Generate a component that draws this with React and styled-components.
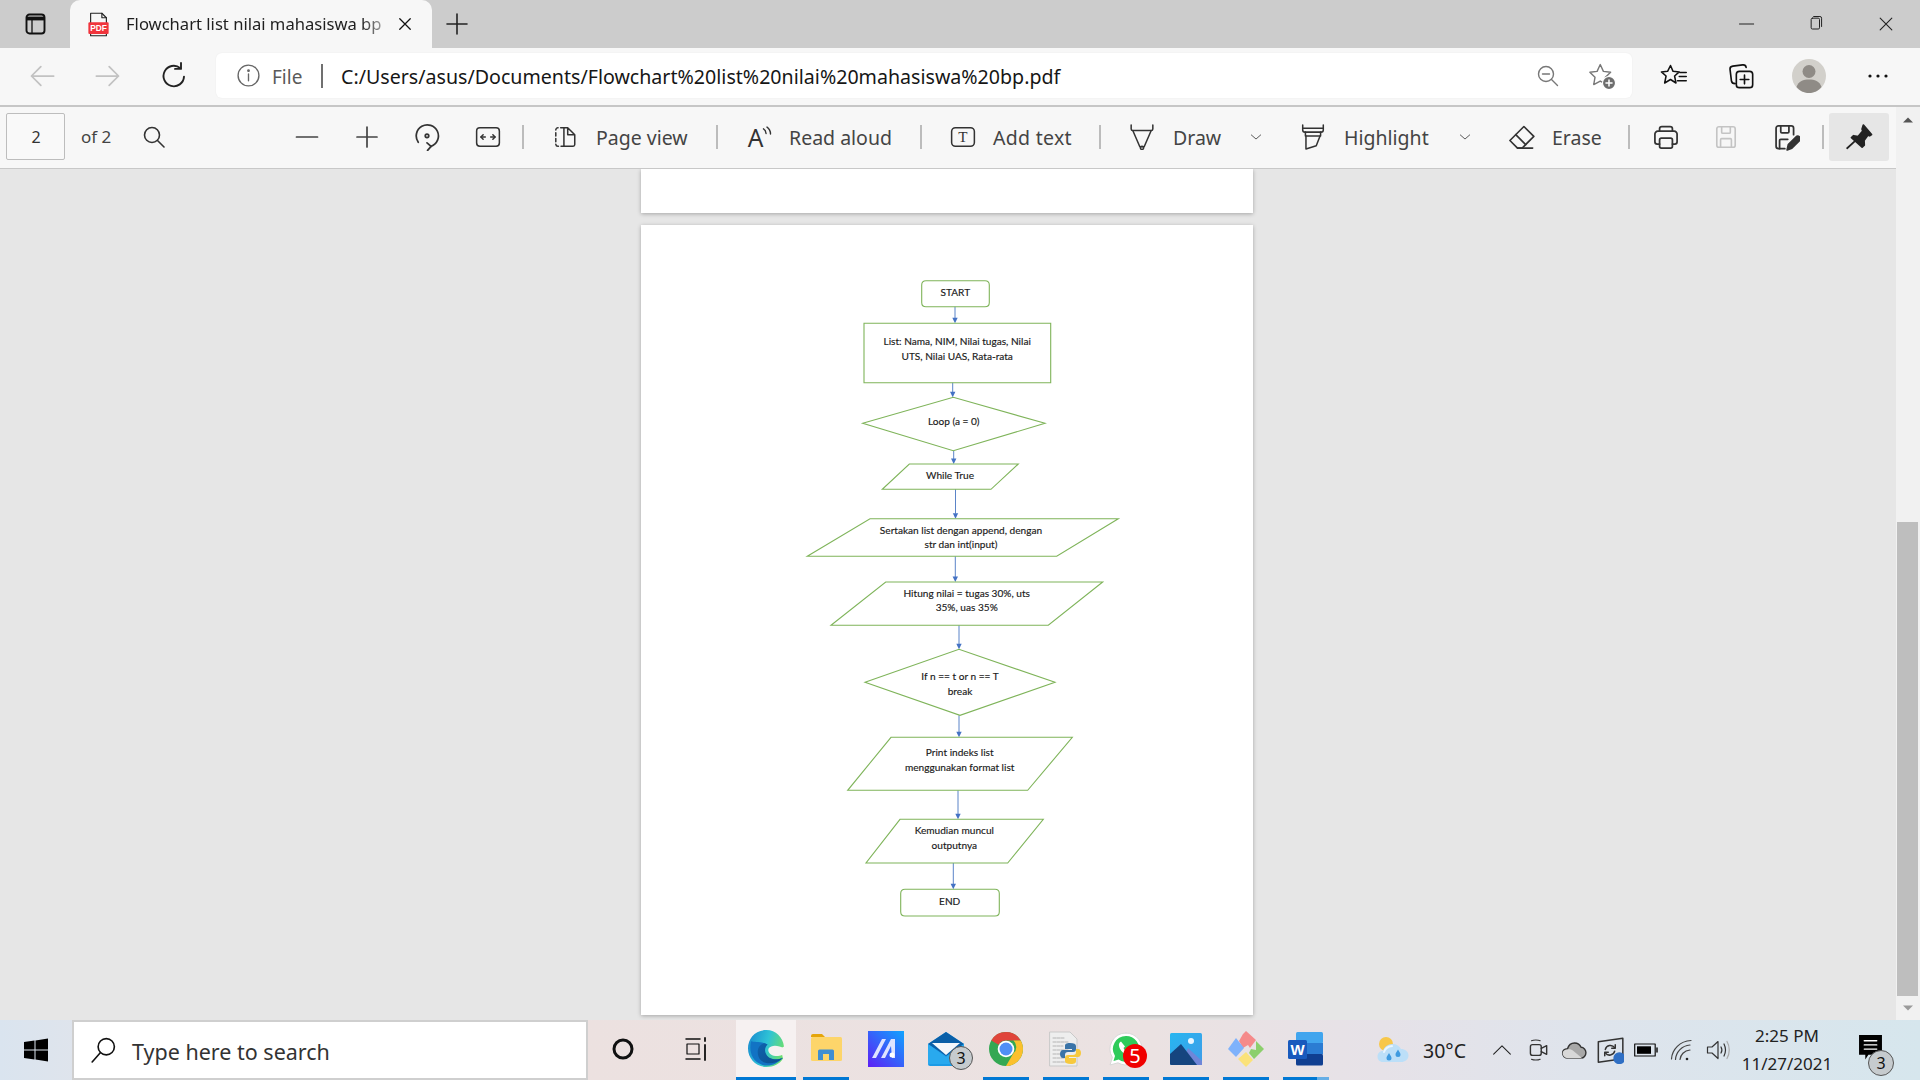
import React from "react";
import styled, { createGlobalStyle } from "styled-components";

const UI = `"Noto Sans", "Open Sans", "Liberation Sans", sans-serif`;

const Global = createGlobalStyle`
  html, body { margin: 0; padding: 0; width: 1920px; height: 1080px; overflow: hidden; background: #e6e6e6; }
  * { box-sizing: border-box; }
`;

const Screen = styled.div`
  width: 1920px; height: 1080px; display: flex; flex-direction: column;
  font-family: ${UI}; overflow: hidden;
`;

/* ---------- generic parts ---------- */
const Glyph = styled.svg`
  display: block; flex: none;
  width: ${p => p.$s || 24}px; height: ${p => p.$s || 24}px;
  color: ${p => p.$c || "#333"};
  fill: none; stroke: currentColor;
  stroke-width: ${p => p.$w || 1.5};
  stroke-linecap: round; stroke-linejoin: round;
`;
const Ico = ({ s, c, w, children, box = 24 }) => (
  <Glyph $s={s} $c={c} $w={w} viewBox={`0 0 ${box} ${box}`}>{children}</Glyph>
);
const IconSlot = styled.div`
  flex: none; display: flex; align-items: center; justify-content: center;
  width: ${p => p.$w || 60}px;
  margin-left: ${p => p.$ml || 0}px;
`;

/* ---------- tab strip ---------- */
const TabStrip = styled.div`
  height: 48px; flex: none; background: #cccccc; display: flex; align-items: center;
`;
const Tab = styled.div`
  width: 362px; height: 48px; background: #f7f7f7; border-radius: 10px 10px 0 0;
  display: flex; align-items: center; padding-left: 15px;
`;
const TabTitle = styled.div`
  width: 267px; margin-left: 14px; padding-bottom: 2px; font-size: 16.6px; color: #1f1f1f; white-space: nowrap;
  -webkit-mask-image: linear-gradient(90deg, #000 88%, rgba(0,0,0,.25) 98%);
  mask-image: linear-gradient(90deg, #000 88%, rgba(0,0,0,.25) 98%);
`;
const WindowControls = styled.div`
  margin-left: auto; display: flex; align-items: center;
`;

/* ---------- address row ---------- */
const AddressRow = styled.div`
  height: 59px; flex: none; background: #f7f7f7; border-bottom: 2px solid #c6c6c6;
  display: flex; align-items: center; padding: 0 0 2px 12px;
`;
const AddressBar = styled.div`
  width: 1416px; height: 45px; margin-left: 12px; background: #fff; border-radius: 6px;
  display: flex; align-items: center; padding: 0 14px 0 18px;
  box-shadow: 0 0 2px rgba(0,0,0,.06);
`;
const FileLabel = styled.span`
  margin-left: 10px; width: 32px; padding-top: 2px; font-size: 19px; color: #5a5a5a; white-space: nowrap;
`;
const AddressSep = styled.div`
  width: 2px; height: 24px; margin-left: 17px; background: #707070;
`;
const Url = styled.span`
  margin-left: 18px; flex: 1; padding-top: 2px; font-size: 19.63px; color: #161616; white-space: nowrap;
`;

/* ---------- body ---------- */
const Body = styled.div`
  flex: 1; min-height: 0; display: flex;
`;
const Column = styled.div`
  flex: 1; min-width: 0; display: flex; flex-direction: column;
`;
const Toolbar = styled.div`
  height: 62px; flex: none; background: #f7f7f7; border-bottom: 1px solid #c8c8c8;
  display: flex; align-items: center; padding: 0 0 2px 6px;
`;
const PageBox = styled.div`
  width: 59px; height: 47px; border: 1px solid #bdbdbd; border-radius: 2px; background: #f9f9f9;
  display: flex; align-items: center; justify-content: center; padding-left: 1px; font-size: 16px; color: #333;
`;
const OfText = styled.span`
  margin-left: 16px; width: 31px; font-size: 17px; color: #444; white-space: nowrap;
`;
const ToolSep = styled.div`
  flex: none; width: 2px; height: 24px; background: #bcbcbc; margin-left: ${p => p.$ml || 0}px;
`;
const ToolLabel = styled.span`
  flex: none; width: ${p => p.$w}px; margin-left: ${p => p.$ml}px; padding-top: 3px; font-size: 19.5px; color: #444;
  white-space: nowrap; line-height: 26px; letter-spacing: ${p => p.$ls || 0}px;
`;
const PinButton = styled.div`
  flex: none; width: 60px; height: 48px; margin-left: 5px; background: #e6e6e6; border-radius: 3px;
  display: flex; align-items: center; justify-content: center;
`;

const Viewer = styled.div`
  flex: 1; min-height: 0; background: #e6e6e6; display: flex; flex-direction: column; align-items: center;
  padding-right: 2px; overflow: hidden;
`;
const PageSheet = styled.div`
  flex: none; width: 612px; height: ${p => p.$h}px; margin-top: ${p => p.$mt || 0}px;
  background: #fff; box-shadow: 0 1px 4px rgba(0,0,0,.28);
`;
const Sheet = styled.svg`
  display: block; width: 612px; height: 790px;
`;
const FlowLine = styled.path`
  fill: none; stroke: #7fb45a; stroke-width: 1.1;
`;
const FlowArrow = styled.path`
  fill: none; stroke: #5b84c8; stroke-width: 1;
`;
const FlowHead = styled.polygon`
  fill: #4472c4;
`;
const FlowText = styled.text`
  font-family: "Lato", "Open Sans", sans-serif; font-size: 10.1px; font-weight: 400; fill: #1a1a1a;
  stroke: #1a1a1a; stroke-width: .15;
  text-anchor: middle; dominant-baseline: central;
`;

const ScrollTrack = styled.div`
  width: 24px; flex: none; background: #f1f1f1; display: flex; flex-direction: column;
`;
const ScrollEnd = styled.div`
  height: ${p => p.$h}px; flex: none; display: flex; align-items: center; justify-content: center;
`;
const ScrollGap = styled.div`
  flex: 1;
`;
const ScrollThumb = styled.div`
  flex: none; height: 474px; width: 21px; margin-left: 1px; background: #bebebe;
`;

/* ---------- taskbar ---------- */
const Taskbar = styled.div`
  height: 60px; flex: none; display: flex; align-items: stretch;
  background: linear-gradient(90deg, #dae4ef 0, #dfe4ec 4%, #ece1e0 30%, #ebe2e2 60%, #e6e2e8 72%, #dfe4ec 82%, #d6e6ed 100%);
`;
const StartSlot = styled.div`
  width: 72px; flex: none; display: flex; align-items: center; justify-content: center;
`;
const SearchBox = styled.div`
  width: 516px; flex: none; background: #fff; border: 2px solid #cfcfcf; display: flex; align-items: center;
  padding-left: 16px;
`;
const SearchText = styled.span`
  margin-left: 16px; padding-top: 3px; font-size: 21.5px; color: #333; white-space: nowrap;
`;
const TaskSlot = styled.div`
  flex: none; width: ${p => p.$w || 60}px; margin-left: ${p => p.$ml || 0}px; position: relative;
  display: flex; align-items: center; justify-content: center; padding-bottom: 3px;
  background: ${p => p.$active ? "#f6f1f1" : "transparent"};
  &::after {
    content: ""; position: absolute; bottom: 0; height: 3px;
    left: ${p => p.$active ? 0 : 7}px; right: ${p => p.$active ? 0 : 7}px;
    background: ${p => p.$open ? (p.$part ? "linear-gradient(90deg,#0078d4 74%,#66aee6 74%)" : "#0078d4") : "transparent"};
  }
`;
const CountBadge = styled.span`
  position: absolute; left: 33px; top: 26px; width: 24px; height: 24px; border-radius: 50%;
  background: #c6cbce; border: 1px solid #555; color: #111; font-size: 16px;
  display: flex; align-items: center; justify-content: center; line-height: 1;
`;
const AlertBadge = styled.span`
  position: absolute; left: 27px; top: 24px; width: 24px; height: 24px; border-radius: 50%;
  background: #f00000; color: #fff; font-size: 20px;
  display: flex; align-items: center; justify-content: center; line-height: 1;
`;
const Temp = styled.span`
  flex: none; width: 44px; margin-left: 14px; align-self: center; font-size: 19.5px; color: #222; white-space: nowrap;
`;
const Clock = styled.div`
  flex: none; width: 102px; display: flex; flex-direction: column; align-items: center; justify-content: center;
  gap: 6px; font-size: 17px; line-height: 22px; color: #222; white-space: nowrap;
`;
const NotifySlot = styled.div`
  flex: none; width: 68px; position: relative; display: flex; align-items: center; justify-content: center;
  padding: 0 4px 6px 0;
`;
const NotifyBadge = styled(CountBadge)`
  left: 30px; top: 30px; width: 26px; height: 26px;
`;

/* ---------- icons ---------- */
const SidebarIcon = () => (
  <Ico s={24} c="#111" w={1.9}>
    <rect x="3.500" y="2.500" width="18" height="19" rx="3" />
    <path d="M4 6.500h17" strokeWidth="3.800" strokeLinecap="butt" />
    <path d="M9 8.500v12" strokeWidth="1.300" />
  </Ico>
);
const PdfIcon = () => (
  <Ico s={27} c="#222" w={1}>
    <path d="M5 11V2h10l4 4v5M5 20v2h14v-2" />
    <path d="M15 2v4h4" />
    <rect x="3" y="10" width="18" height="10.500" rx="1" fill="#f0343c" stroke="none" />
    <text x="12" y="18" textAnchor="middle" fontFamily="Liberation Sans, sans-serif" fontWeight="700" fontSize="7.400" fill="#fff" stroke="none">PDF</text>
  </Ico>
);
const CloseIcon = ({ s = 18, c = "#111", w = 1.700 }) => (
  <Ico s={s} c={c} w={w}><path d="M5 5l14 14M19 5L5 19" /></Ico>
);
const PlusIcon = ({ s = 24, c = "#222", w = 1.600 }) => (
  <Ico s={s} c={c} w={w}><path d="M12 2v20M2 12h20" /></Ico>
);
const BackIcon = () => <Ico s={28} c="#c2c2c2"><path d="M22 12H3M11 4l-8 8 8 8" /></Ico>;
const ForwardIcon = () => <Ico s={28} c="#c2c2c2"><path d="M2 12h19M13 4l8 8-8 8" /></Ico>;
const RefreshIcon = () => (
  <Ico s={30} c="#222" w={1.500}>
    <path d="M20 12.500a8.200 8.200 0 1 1-3-6.800" />
    <path d="M17.600 1.500v4.800h-4.800" />
  </Ico>
);
const InfoIcon = () => (
  <Ico s={25} c="#666" w={1.300}>
    <circle cx="12" cy="12" r="10" />
    <path d="M12 10.500v6.500" />
    <circle cx="12" cy="7.400" r=".7" fill="currentColor" />
  </Ico>
);
const ZoomOutIcon = () => (
  <Ico s={24} c="#777" w={1.400}>
    <circle cx="10" cy="10" r="7.500" /><path d="M6.500 10h7M15.500 15.500l6 6" />
  </Ico>
);
const StarPath = "M10.500 2.200l2.700 5.800 6.200.8-4.500 4.300 1.200 6.200-5.600-3-5.600 3 1.100-6.200L1.600 8.800l6.200-.8z";
const StarAddIcon = () => (
  <Ico s={28} c="#777" w={1.200}>
    <path d={StarPath} />
    <circle cx="18" cy="18" r="5.600" fill="#6e6e6e" stroke="#fff" strokeWidth="1" />
    <path d="M18 15.400v5.200M15.400 18h5.200" stroke="#fff" strokeWidth="1.300" />
  </Ico>
);
const FavoritesIcon = () => (
  <Ico s={28} c="#111" w={1.300}>
    <path d="M9 3l2.200 5 5.300.5-4 3.500 1.200 6L9 15l-5 3 1.200-6-4-3.500 5.300-.5z" />
    <path d="M17 9h5.500M16.500 12.500h6M15 16h7.500" />
  </Ico>
);
const CollectionsIcon = () => (
  <Ico s={28} c="#111" w={1.400}>
    <path d="M7 18.500c-2 0-3-1-3.200-2.400L2.600 6.400C2.400 4.800 3.400 3.700 5 3.500l8.400-1c1.600-.2 2.800.8 3 2.200" />
    <rect x="8" y="8" width="14" height="14" rx="2.600" />
    <path d="M15 11.300v7.400M11.300 15h7.400" />
  </Ico>
);
const ProfileIcon = () => (
  <Ico s={34} c="#8f8b86" w={0} box={34}>
    <circle cx="17" cy="17" r="17" fill="#d2d0cb" stroke="none" />
    <circle cx="17" cy="12.500" r="6.500" fill="#8f8b86" stroke="none" />
    <path d="M4.500 28c2-6 7-7.500 12.500-7.500S27.500 22 29.500 28c-3 3.800-7.500 6-12.500 6S7.500 31.800 4.500 28z" fill="#8f8b86" stroke="none" />
  </Ico>
);
const DotsIcon = () => (
  <Ico s={24} c="#111" w={0}>
    <circle cx="4" cy="12" r="1.600" fill="#111" stroke="none" />
    <circle cx="12" cy="12" r="1.600" fill="#111" stroke="none" />
    <circle cx="20" cy="12" r="1.600" fill="#111" stroke="none" />
  </Ico>
);
const MinIcon = () => <Ico s={20} c="#222" w={1.200}><path d="M3 12h17" /></Ico>;
const MaxIcon = () => (
  <Ico s={20} c="#222" w={1.200}>
    <rect x="5" y="5" width="10" height="13" rx="1.500" />
    <path d="M8 3h7.500A2 2 0 0 1 17.500 5v10" />
  </Ico>
);
const SearchIcon = () => (
  <Ico s={24} c="#333" w={1.600}>
    <circle cx="10" cy="10" r="7.500" /><path d="M15.500 15.500l6.500 6.500" />
  </Ico>
);
const MinusTool = () => <Ico s={24} c="#444" w={1.700}><path d="M1.500 12h21" /></Ico>;
const RotateIcon = () => (
  <Ico s={28} c="#333" w={1.500}>
    <path d="M4.500 16.500A9.500 9.500 0 1 1 15.500 20" />
    <circle cx="12" cy="11" r="1.500" />
    <path d="M12.500 23.500l3-3.500-3.500-3" />
  </Ico>
);
const FitIcon = () => (
  <Ico s={26} c="#333" w={1.400}>
    <rect x="1.500" y="3.500" width="21" height="17" rx="3" />
    <path d="M5.500 12h4M14.500 12h4" />
    <path d="M7.500 10l-2 2 2 2M16.500 10l2 2-2 2" />
  </Ico>
);
const PageViewIcon = () => (
  <Ico s={26} c="#333" w={1.400}>
    <path d="M11 3.500H5.500a2 2 0 0 0-2 2v13a2 2 0 0 0 2 2H11" strokeDasharray="3 2.400" />
    <path d="M11 3.500v17h8.500a1.500 1.500 0 0 0 1.500-1.500V10l-6.500-6.500zM14.500 3.500V10H21" />
  </Ico>
);
const ReadAloudIcon = () => (
  <Ico s={28} c="#333" w={1.200}>
    <text x="1.500" y="20.500" fontFamily="Noto Sans, sans-serif" fontSize="21" fill="#333" stroke="none">A</text>
    <path d="M15 5c1.500.8 2 2 2.200 4M18 3.500c2 1.300 3 3 3 6" />
  </Ico>
);
const AddTextIcon = () => (
  <Ico s={26} c="#333" w={1.400}>
    <rect x="1.500" y="3.500" width="21" height="17" rx="3.500" />
    <text x="12" y="17" textAnchor="middle" fontFamily="Liberation Serif, serif" fontSize="14" fill="#333" stroke="none">T</text>
  </Ico>
);
const DrawIcon = () => (
  <Ico s={26} c="#333" w={1.400}>
    <path d="M2 1v3.500c0 1 .5 1.500 1.500 1.500h17c1 0 1.500-.5 1.500-1.500V1" />
    <path d="M3.500 6l6.500 15h4L20.500 6" />
    <circle cx="12" cy="22" r="1.500" />
  </Ico>
);
const HighlightIcon = () => (
  <Ico s={26} c="#333" w={1.400}>
    <path d="M2.500 1v4.500a2 2 0 0 0 2 2h15a2 2 0 0 0 2-2V1" />
    <path d="M2.500 4h19" />
    <path d="M5 7.500V11h14V7.500" />
    <path d="M5.500 11v12l9.500-3 3.500-9" />
  </Ico>
);
const EraseIcon = () => (
  <Ico s={28} c="#333" w={1.400}>
    <path d="M14.500 3L23 11.500 13 21.500H9L2.500 15z" />
    <path d="M7.500 10l8.500 8.500M9 21.500h13" />
  </Ico>
);
const Chevron = () => <Ico s={14} c="#444" w={1.500}><path d="M4 8.500l8 7 8-7" /></Ico>;
const PrintIcon = () => (
  <Ico s={28} c="#333" w={1.500}>
    <path d="M6.500 7V5a2 2 0 0 1 2-2h7a2 2 0 0 1 2 2v2" />
    <path d="M6.500 18H4.500a2 2 0 0 1-2-2V9.500A2.500 2.500 0 0 1 5 7h14a2.500 2.500 0 0 1 2.500 2.500V16a2 2 0 0 1-2 2h-2" />
    <rect x="6.500" y="13" width="11" height="8.500" rx="1.500" />
  </Ico>
);
const SaveIcon = ({ c = "#c4c4c4" }) => (
  <Ico s={26} c={c} w={1.500}>
    <path d="M5.500 2.500h13a2 2 0 0 1 2 2v15a2 2 0 0 1-2 2h-13a2 2 0 0 1-2-2v-15a2 2 0 0 1 2-2z" />
    <path d="M8 2.500v5a1 1 0 0 0 1 1h6a1 1 0 0 0 1-1v-5M7 21.500v-7a1 1 0 0 1 1-1h8a1 1 0 0 1 1 1v7" />
  </Ico>
);
const SaveAsIcon = () => (
  <Ico s={28} c="#333" w={1.500}>
    <path d="M11 22H5.500a2 2 0 0 1-2-2V4.500a2 2 0 0 1 2-2h11a2 2 0 0 1 2 2V10" />
    <path d="M7.500 2.500v5a1 1 0 0 0 1 1h5a1 1 0 0 0 1-1v-5M6.500 22v-7a1 1 0 0 1 1-1h6" />
    <path d="M13 23l1-4.500 6.500-6.500a2 2 0 0 1 3 3L17 21.500z" fill="#333" />
  </Ico>
);
const PinIcon = () => (
  <Ico s={30} c="#222" w={1.400}>
    <path d="M15.500 2.500L22 10l-1.500 1-1.500-.5-3 4.200.2 3.800-1.700 1.500-8.500-7.500 1.700-1.500 3.600.7L15 7.200l-.5-1.500z" fill="#222" />
    <path d="M8.500 15.500L2.500 21" />
  </Ico>
);
const TriUp = ({ c = "#555" }) => <Ico s={12} c={c} w={0}><path d="M2 17h20L12 7z" fill={c} stroke="none" /></Ico>;
const TriDown = ({ c = "#9a9a9a" }) => <Ico s={12} c={c} w={0}><path d="M2 7h20L12 17z" fill={c} stroke="none" /></Ico>;

/* taskbar icons */
const WinLogo = () => (
  <Ico s={24} c="#000" w={0}>
    <path d="M0 4l10.500-1.500V11.500H0zM11.500 2.400L24 .5V11.500H11.500zM0 12.500h10.500V21.500L0 20zM11.500 12.500H24V23.500L11.500 21.600z" fill="#000" stroke="none" />
  </Ico>
);
const TaskSearch = () => (
  <Ico s={26} c="#111" w={1.500}>
    <circle cx="15" cy="9" r="7.500" /><path d="M9.500 14.500L2 23" />
  </Ico>
);
const CortanaIcon = () => (
  <Ico s={24} c="#111" w={3}><circle cx="12" cy="12" r="9" /></Ico>
);
const TaskViewIcon = () => (
  <Ico s={24} c="#111" w={1.200}>
    <path d="M1 2h14M1 22h14" strokeWidth="1.500" />
    <rect x="2" y="7" width="12" height="10" />
    <path d="M20 1v3M20 8v15" strokeWidth="1.800" />
  </Ico>
);
const EdgeIcon = () => (
  <Ico s={37} w={0} box={36}>
    <defs>
      <linearGradient id="edgeA" x1="0" y1="0.300" x2="1" y2="0.600">
        <stop offset="0" stopColor="#1b8fd0" /><stop offset=".5" stopColor="#2ec3d6" /><stop offset="1" stopColor="#6ee06a" />
      </linearGradient>
      <linearGradient id="edgeB" x1="0" y1="0" x2="1" y2="1">
        <stop offset="0" stopColor="#0f62ad" /><stop offset="1" stopColor="#0c4f8f" />
      </linearGradient>
    </defs>
    <path d="M18 0C7 0 0 8 0 18c0 10 8 18 18 18 7 0 13-3 16-8l-2-10 3-2C34 7 27 0 18 0z" fill="url(#edgeA)" stroke="none" />
    <path d="M3 11C1 20 3 30 14 34c7 2 15-1 20-7-6 3-13 2-16-2-3-3-3-8 1-11-6-3-13-2-16-3z" fill="#1273c4" stroke="none" />
    <path d="M16 13c-7 1-9 11-3 17 5 4 15 3 21-3-7 3-14 1-16-3-2-3-2-7 1-10z" fill="url(#edgeB)" stroke="none" />
    <path d="M20 18c3-4 10-3 15 0l1 3c-1 4-7 5-11 4-4-1-6-4-5-7z" fill="#f6f1f1" stroke="none" />
  </Ico>
);
const FolderIcon = () => (
  <Ico s={32} w={0} box={32}>
    <path d="M1 3a2 2 0 0 1 2-2h9l3 3h-14z" fill="#e5a50a" stroke="none" />
    <rect x="1" y="4" width="31" height="24" rx="1.500" fill="#fdd56a" stroke="none" />
    <path d="M8 27V18a1.500 1.500 0 0 1 1.500-1.500h13A1.500 1.500 0 0 1 24 18v9h-5v-6h-6v6z" fill="#3f8fd2" stroke="none" />
  </Ico>
);
const AppMIcon = () => (
  <Ico s={36} w={0} box={36}>
    <defs>
      <linearGradient id="mG" x1="1" y1="0" x2="0" y2="1">
        <stop offset="0" stopColor="#10a4ff" /><stop offset="1" stopColor="#5d1ff5" />
      </linearGradient>
    </defs>
    <rect width="36" height="36" fill="url(#mG)" stroke="none" />
    <path d="M4 27L14 8h4L8 27zM13 27L23 8h4v19h-3l-1-12-6 12z" fill="#dfe4ff" stroke="none" />
    <circle cx="24" cy="24" r="2.500" fill="#fff" stroke="none" />
  </Ico>
);
const MailIcon = () => (
  <Ico s={36} w={0} box={36}>
    <path d="M0 13L18 1l18 12v20a2 2 0 0 1-2 2H2a2 2 0 0 1-2-2z" fill="#1c9be6" stroke="none" />
    <path d="M0 13L18 1l18 12-18 12z" fill="#0a5fa8" stroke="none" />
    <path d="M4 12h28l-14 12z" fill="#f4f7fb" stroke="none" />
    <path d="M0 13l18 13 18-13v20H0z" fill="#29a9ee" stroke="none" />
  </Ico>
);
const ChromeIcon = () => (
  <Ico s={34} w={0} box={34}>
    <circle cx="17" cy="17" r="17" fill="#34a853" stroke="none" />
    <path d="M17 0a17 17 0 0 1 14.700 8.500H17a8.500 8.500 0 0 0-7.400 4.300L2.300 8.400A17 17 0 0 1 17 0z" fill="#e0443a" stroke="none" />
    <path d="M31.700 8.500A17 17 0 0 1 17 34l7.400-12.700a8.500 8.500 0 0 0 0-12.800z" fill="#fbc02d" stroke="none" />
    <circle cx="17" cy="17" r="8.300" fill="#fff" stroke="none" />
    <circle cx="17" cy="17" r="6.500" fill="#4f8ff5" stroke="none" />
  </Ico>
);
const PythonFileIcon = () => (
  <Ico s={36} w={0} box={36}>
    <path d="M2 1h20l7 7v27H2z" fill="#eeeeee" stroke="#c9c9c9" strokeWidth="1" />
    <path d="M5 7h12M5 11h16M5 15h10M5 19h15M5 23h11M5 27h13M5 31h15" stroke="#b4b4b4" strokeWidth="1" strokeDasharray="3 1" />
    <path d="M22 12c-4 0-5 1-5 3v3h7v1h-9c-2 0-3 2-3 4s1 4 3 4h2v-3c0-2 1-3 3-3h5c2 0 3-1 3-3v-3c0-2-2-3-6-3z" fill="#3a74a8" stroke="none" />
    <path d="M23 33c4 0 5-1 5-3v-3h-7v-1h9c2 0 3-2 3-4s-1-4-3-4h-2v3c0 2-1 3-3 3h-5c-2 0-3 1-3 3v3c0 2 2 3 6 3z" fill="#f7c93e" stroke="none" />
  </Ico>
);
const WhatsAppIcon = () => (
  <Ico s={34} w={0} box={34}>
    <path d="M17 1a16 16 0 0 0-13.600 24.400L1 33l8-2.200A16 16 0 1 0 17 1z" fill="#fff" stroke="#d8d8d8" strokeWidth="1" />
    <path d="M17 4a13 13 0 0 0-11 20l-1.500 5 5.200-1.400A13 13 0 1 0 17 4z" fill="#2ecb5a" stroke="none" />
    <path d="M12 9.500c-1.500.8-2.500 2.500-2 4.500 1 4.500 5 8.500 9.500 9.500 2 .4 3.500-.5 4.500-2l-3.500-2.500-1.500 1.500c-2-1-3.500-2.500-4.500-4.500l1.500-1.500z" fill="#fff" stroke="none" />
  </Ico>
);
const PhotosIcon = () => (
  <Ico s={32} w={0} box={32}>
    <defs>
      <linearGradient id="phG" x1="0" y1="0" x2="1" y2="1">
        <stop offset="0" stopColor="#27b6f0" /><stop offset="1" stopColor="#3f9ce8" />
      </linearGradient>
    </defs>
    <rect width="32" height="32" rx="1.500" fill="url(#phG)" stroke="none" />
    <circle cx="21" cy="8" r="3" fill="#e8f6ff" stroke="none" />
    <path d="M18 15l14 13v4H10z" fill="#6f86d8" stroke="none" />
    <path d="M0 21L11 11l16 21H1.500A1.500 1.500 0 0 1 0 30.500z" fill="#15457f" stroke="none" />
  </Ico>
);
const GemIcon = () => (
  <Ico s={36} w={0} box={36}>
    <path d="M18 0l10 9-6 8-2-3-5 3-4-7 4-7z" fill="#f58a8a" stroke="none" />
    <path d="M28 10l8 8-10 10-5-6 2-4 5 1z" fill="#8ccf6c" stroke="none" />
    <path d="M8 7l8 10-8 9-8-8z" fill="#7fb2fb" stroke="none" />
    <path d="M18 21l7 8-7 7-8-8z" fill="#fbe27a" stroke="none" />
  </Ico>
);
const WordIcon = () => (
  <Ico s={36} w={0} box={36}>
    <rect x="8" y="1" width="27" height="11.500" rx="1.500" fill="#41a5ee" stroke="none" />
    <rect x="8" y="12" width="27" height="11.500" fill="#2b7cd3" stroke="none" />
    <rect x="8" y="23" width="27" height="11.500" rx="1.500" fill="#103f91" stroke="none" />
    <rect x="0" y="9" width="19" height="19" rx="1.500" fill="#185abd" stroke="none" />
    <text x="9.500" y="24" textAnchor="middle" fontFamily="Liberation Sans, sans-serif" fontWeight="700" fontSize="15" fill="#fff" stroke="none">W</text>
  </Ico>
);
const WeatherIcon = () => (
  <Ico s={32} w={0} box={32}>
    <circle cx="9" cy="10" r="7" fill="#f7c74a" stroke="none" />
    <path d="M6 28c-3.500 0-5.500-2.500-5.500-5.500S2.500 17 6 17c1-4 5-7 9.500-7 4 0 7 2 8.500 5 4 0 7.500 2.500 7.500 6.500S28 28 24 28z" fill="#bcdff8" stroke="none" />
    <path d="M7 18c1-3 4-5.500 8-6" stroke="#eaf6ff" strokeWidth="2" />
    <path d="M12 19c1.500 2.500 2.500 3.500 2.500 5a2.500 2.500 0 0 1-5 0c0-1.500 1-2.500 2.500-5zM21 15.500c1.500 2.500 2.500 3.500 2.500 5a2.500 2.500 0 0 1-5 0c0-1.500 1-2.500 2.500-5z" fill="#3f9be0" stroke="none" />
  </Ico>
);
const CaretUp = () => <Ico s={20} c="#222" w={1.300}><path d="M2 17L12 7l10 10" /></Ico>;
const MeetIcon = () => (
  <Ico s={26} c="#333" w={1.300}>
    <rect x="5" y="7" width="10" height="10" rx="2" />
    <path d="M15 10.500l5-2.500v8l-5-2.500" />
    <path d="M6 3.500c2-1 6-1 8 0M6 20.500c2 1 6 1 8 0" strokeWidth="1" />
  </Ico>
);
const CloudIcon = () => (
  <Ico s={26} c="#333" w={1.300}>
    <path d="M6.500 19.500C3.500 19.500 1.500 17.500 1.500 15s2-4 4.500-4.200C7 7.500 9.500 5.500 12.500 5.500c3 0 5 1.500 6 4 2.500 0 4.500 2.500 4.500 5s-2 5-4.500 5z" fill="#a8a8a8" />
    <path d="M6 11.500c2-.6 4 0 5.500 1.500l8 6.500h-13C3.500 19.500 1.500 17 1.500 15s2-3.500 4.500-3.500z" fill="#d8d8d8" stroke="none" />
  </Ico>
);
const SyncScreenIcon = () => (
  <Ico s={28} c="#333" w={1.300}>
    <path d="M2 5l21-3v17.500l-21 3z" />
    <path d="M8 11.500a4.500 4.500 0 0 1 8-1.500M16 13a4.500 4.500 0 0 1-8 1.500" />
    <path d="M16.500 7.500V10.500H13.500M7.500 17v-3h3" />
    <circle cx="20" cy="19" r="4.500" fill="#2f6fc4" stroke="#2f6fc4" />
  </Ico>
);
const BatteryIcon = () => (
  <Ico s={24} c="#111" w={1.200}>
    <rect x="0.700" y="6" width="20.500" height="12" />
    <rect x="3" y="8.300" width="14" height="7.500" fill="#000" stroke="none" />
    <path d="M23 10v4" strokeWidth="1.500" />
  </Ico>
);
const WifiIcon = () => (
  <Ico s={24} c="#444" w={1.200}>
    <path d="M1.500 21C2 11.500 10 3 21 2.500M5.500 21.500C6 14 12 7.500 20 7M10 21.500c.5-4.500 4-9 10-9.500" />
    <circle cx="17" cy="21" r="1.300" fill="#222" stroke="none" />
  </Ico>
);
const VolumeIcon = () => (
  <Ico s={24} c="#333" w={1.200}>
    <path d="M1.500 9v6H6l6 5.500V3.500L6 9z" />
    <path d="M15 9c1.200 2 1.200 4 0 6M18 6c2 4 2 8 0 12" />
    <path d="M21 3.500c3 5 3 12 0 17" stroke="#aaa" />
  </Ico>
);
const NotifyIcon = () => (
  <Ico s={25} c="#000" w={0}>
    <path d="M1 0h22v19H10l-3 4.500V19H1z" fill="#000" stroke="none" />
    <path d="M6 5.500h12M6 9.500h12M6 13.500h12" stroke="#fff" strokeWidth="1.300" />
  </Ico>
);

/* ---------- flowchart ---------- */
const arrows = [
  [955, 306.7, 323.3], [952.7, 382.7, 397.3], [953.7, 450.7, 464], [955.5, 489.3, 518.7],
  [955.3, 556.3, 582], [959, 625.3, 649.3], [959, 715.3, 737.3], [958, 790.3, 819.3], [953.3, 863, 889.3],
];
const shapes = [
  "M864 323.3H1050.7V382.7H864Z",
  "M862.7 423.3L953.3 397.3L1045 423.3L953.3 450.7Z",
  "M909.3 464H1018.3L991 489.3H882.3Z",
  "M870 518.7H1118.3L1056.7 556.3H807.3Z",
  "M885.7 582H1102.7L1048.3 625.3H831Z",
  "M865 682.3L959 649.3L1055 682.3L960 715.3Z",
  "M891 737.3H1072.3L1027.7 790.3H847.7Z",
  "M900 819.3H1043.3L1007.7 863H866Z",
  "M926 280.7H985Q989.3 280.7 989.3 285V302.4Q989.3 306.7 985 306.7H926Q921.7 306.7 921.7 302.4V285Q921.7 280.7 926 280.7Z",
  "M905 889.3H995Q999.3 889.3 999.3 893.6V911.7Q999.3 916 995 916H905Q900.7 916 900.7 911.7V893.6Q900.7 889.3 905 889.3Z",
];
const labels = [
  ["START", 955.3, 292],
  ["List: Nama, NIM, Nilai tugas, Nilai", 957.2, 341],
  ["UTS, Nilai UAS, Rata-rata", 957.2, 355.8],
  ["Loop (a = 0)", 953.7, 420.8],
  ["While True", 950, 475],
  ["Sertakan list dengan append, dengan", 961, 530],
  ["str dan int(input)", 961, 544.4],
  ["Hitung nilai = tugas 30%, uts", 966.7, 593],
  ["35%, uas 35%", 966.7, 607],
  ["If n == t or n == T", 960, 676],
  ["break", 960, 691],
  ["Print indeks list", 959.7, 752],
  ["menggunakan format list", 959.7, 767],
  ["Kemudian muncul", 954.3, 830],
  ["outputnya", 954.3, 845],
  ["END", 949.7, 901],
];
const Flowchart = () => (
  <Sheet viewBox="641 225 612 790">
    {arrows.map(([x, a, b]) => (
      <g key={a}>
        <FlowArrow d={`M${x} ${a}V${b - 5}`} />
        <FlowHead points={`${x - 2.7},${b - 5.5} ${x + 2.7},${b - 5.5} ${x},${b}`} />
      </g>
    ))}
    {shapes.map(d => <FlowLine key={d} d={d} />)}
    {labels.map(([t, x, y]) => <FlowText key={t} x={x} y={y}>{t}</FlowText>)}
  </Sheet>
);

export default function App() {
  return (
    <Screen>
      <Global />
      <TabStrip>
        <IconSlot $w={70}><SidebarIcon /></IconSlot>
        <Tab>
          <PdfIcon />
          <TabTitle>Flowchart list nilai mahasiswa bp</TabTitle>
          <IconSlot $w={24}><CloseIcon /></IconSlot>
        </Tab>
        <IconSlot $w={24} $ml={13}><PlusIcon /></IconSlot>
        <WindowControls>
          <IconSlot $w={70}><MinIcon /></IconSlot>
          <IconSlot $w={70}><MaxIcon /></IconSlot>
          <IconSlot $w={68}><CloseIcon s={20} c="#222" w={1.300} /></IconSlot>
        </WindowControls>
      </TabStrip>

      <AddressRow>
        <IconSlot><BackIcon /></IconSlot>
        <IconSlot $ml={6}><ForwardIcon /></IconSlot>
        <IconSlot $ml={6}><RefreshIcon /></IconSlot>
        <AddressBar>
          <IconSlot $w={28}><InfoIcon /></IconSlot>
          <FileLabel>File</FileLabel>
          <AddressSep />
          <Url>C:/Users/asus/Documents/Flowchart%20list%20nilai%20mahasiswa%20bp.pdf</Url>
          <IconSlot $w={28}><ZoomOutIcon /></IconSlot>
          <IconSlot $w={32} $ml={24}><StarAddIcon /></IconSlot>
        </AddressBar>
        <IconSlot $ml={12}><FavoritesIcon /></IconSlot>
        <IconSlot $ml={7}><CollectionsIcon /></IconSlot>
        <IconSlot $ml={8}><ProfileIcon /></IconSlot>
        <IconSlot $ml={9}><DotsIcon /></IconSlot>
      </AddressRow>

      <Body>
        <Column>
          <Toolbar>
            <PageBox>2</PageBox>
            <OfText>of 2</OfText>
            <IconSlot $w={48} $ml={18}><SearchIcon /></IconSlot>
            <IconSlot $ml={99}><MinusTool /></IconSlot>
            <IconSlot><PlusIcon c="#444" w={1.700} /></IconSlot>
            <IconSlot><RotateIcon /></IconSlot>
            <IconSlot $ml={1}><FitIcon /></IconSlot>
            <ToolSep $ml={4} />
            <IconSlot $w={28} $ml={27}><PageViewIcon /></IconSlot>
            <ToolLabel $w={96} $ml={17}>Page view</ToolLabel>
            <ToolSep $ml={24} />
            <IconSlot $w={28} $ml={28}><ReadAloudIcon /></IconSlot>
            <ToolLabel $w={103} $ml={15}>Read aloud</ToolLabel>
            <ToolSep $ml={28} />
            <IconSlot $w={28} $ml={27}><AddTextIcon /></IconSlot>
            <ToolLabel $w={80} $ml={16} $ls={0.3}>Add text</ToolLabel>
            <ToolSep $ml={26} />
            <IconSlot $w={28} $ml={27}><DrawIcon /></IconSlot>
            <ToolLabel $w={47} $ml={17}>Draw</ToolLabel>
            <IconSlot $w={20} $ml={26}><Chevron /></IconSlot>
            <IconSlot $w={28} $ml={33}><HighlightIcon /></IconSlot>
            <ToolLabel $w={86} $ml={17}>Highlight</ToolLabel>
            <IconSlot $w={20} $ml={25}><Chevron /></IconSlot>
            <IconSlot $w={28} $ml={32}><EraseIcon /></IconSlot>
            <ToolLabel $w={47} $ml={17}>Erase</ToolLabel>
            <ToolSep $ml={29} />
            <IconSlot $ml={6}><PrintIcon /></IconSlot>
            <IconSlot><SaveIcon /></IconSlot>
            <IconSlot><SaveAsIcon /></IconSlot>
            <ToolSep $ml={6} />
            <PinButton><PinIcon /></PinButton>
          </Toolbar>
          <Viewer>
            <PageSheet $h={44} />
            <PageSheet $h={790} $mt={12}><Flowchart /></PageSheet>
          </Viewer>
        </Column>
        <ScrollTrack>
          <ScrollEnd $h={26}><TriUp /></ScrollEnd>
          <ScrollGap />
          <ScrollThumb />
          <ScrollEnd $h={24}><TriDown /></ScrollEnd>
        </ScrollTrack>
      </Body>

      <Taskbar>
        <StartSlot><WinLogo /></StartSlot>
        <SearchBox>
          <TaskSearch />
          <SearchText>Type here to search</SearchText>
        </SearchBox>
        <TaskSlot $ml={5}><CortanaIcon /></TaskSlot>
        <TaskSlot $ml={14}><TaskViewIcon /></TaskSlot>
        <TaskSlot $ml={9} $active $open><EdgeIcon /></TaskSlot>
        <TaskSlot $open><FolderIcon /></TaskSlot>
        <TaskSlot><AppMIcon /></TaskSlot>
        <TaskSlot><MailIcon /><CountBadge>3</CountBadge></TaskSlot>
        <TaskSlot $open><ChromeIcon /></TaskSlot>
        <TaskSlot $open><PythonFileIcon /></TaskSlot>
        <TaskSlot $open><WhatsAppIcon /><AlertBadge>5</AlertBadge></TaskSlot>
        <TaskSlot $open><PhotosIcon /></TaskSlot>
        <TaskSlot $open><GemIcon /></TaskSlot>
        <TaskSlot $open $part><WordIcon /></TaskSlot>
        <IconSlot $w={32} $ml={41}><WeatherIcon /></IconSlot>
        <Temp>30°C</Temp>
        <IconSlot $w={36} $ml={17}><CaretUp /></IconSlot>
        <IconSlot $w={36}><MeetIcon /></IconSlot>
        <IconSlot $w={36}><CloudIcon /></IconSlot>
        <IconSlot $w={36}><SyncScreenIcon /></IconSlot>
        <IconSlot $w={36}><BatteryIcon /></IconSlot>
        <IconSlot $w={36}><WifiIcon /></IconSlot>
        <IconSlot $w={36}><VolumeIcon /></IconSlot>
        <Clock><span>2:25 PM</span><span>11/27/2021</span></Clock>
        <NotifySlot><NotifyIcon /><NotifyBadge>3</NotifyBadge></NotifySlot>
      </Taskbar>
    </Screen>
  );
}
